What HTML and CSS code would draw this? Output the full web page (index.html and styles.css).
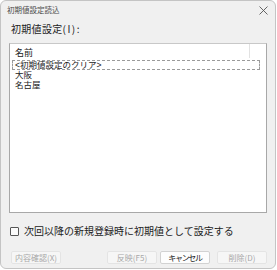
FILE: index.html
```html
<!DOCTYPE html>
<html lang="ja">
<head>
<meta charset="utf-8">
<link rel="stylesheet" href="styles.css">
</head>
<body>
<div class="window">
  <div class="titlebar">
    <span class="title">初期値設定読込</span>
    <svg class="close" width="9" height="9" viewBox="0 0 9 9"><path d="M0.5 0.5 L8.5 8.5 M8.5 0.5 L0.5 8.5" stroke="#555" stroke-width="0.9" fill="none"/></svg>
  </div>
  <div class="content">
    <div class="label">初期値設定<span class="half">(I):</span></div>
    <div class="list">
      <div class="header"><span class="hcell">名前</span></div>
      <div class="row focus">&lt;初期値設定のクリア&gt;</div>
      <div class="row">大阪</div>
      <div class="row">名古屋</div>
    </div>
    <div class="check">
      <span class="box"></span>
      <span class="check-text">次回以降の新規登録時に初期値として設定する</span>
    </div>
    <div class="buttons">
      <div class="btn disabled">内容確認(X)</div>
      <div class="spacer"></div>
      <div class="btn disabled">反映(F5)</div>
      <div class="btn primary cancel">キャンセル</div>
      <div class="btn disabled del">削除(D)</div>
    </div>
  </div>
</div>
</body>
</html>
```
FILE: styles.css
```css
html, body {
  margin: 0;
  padding: 0;
  background: #ffffff;
}
body {
  font-family: "Noto Sans CJK JP", "Noto Sans", sans-serif;
  color: #222;
}
.window {
  width: 274px;
  height: 267px;
  border: 1px solid #c4c4c4;
  border-radius: 6px;
  background: #f0f0f0;
  box-sizing: content-box;
  display: flex;
  flex-direction: column;
  overflow: hidden;
}
.titlebar {
  height: 18px;
  display: flex;
  align-items: center;
  padding-left: 6px;
  padding-right: 7px;
}
.title {
  font-size: 7.5px;
  color: #4a4a4a;
  line-height: 10px;
  flex: 1;
}
.close {
  display: block;
}
.content {
  padding: 4px 8px 0 8px;
  display: flex;
  flex-direction: column;
}
.label {
  font-size: 10px;
  line-height: 12px;
  height: 12px;
  padding-left: 2px;
  color: #222;
  letter-spacing: 0.3px;
}
.half {
  letter-spacing: 1.5px;
}
.list {
  margin-top: 8px;
  height: 168px;
  background: #ffffff;
  border: 1px solid #a8a8a8;
  border-top-color: #c8c8c8;
}
.header {
  height: 16px;
  display: flex;
}
.hcell {
  width: 240px;
  height: 14px;
  border-right: 1px solid #e2e2e2;
  font-size: 9px;
  line-height: 12px;
  padding-top: 3px;
  padding-left: 5px;
  box-sizing: border-box;
  overflow: hidden;
}
.row {
  position: relative;
  height: 10px;
  line-height: 10px;
  font-family: "Liberation Sans", "Noto Sans CJK JP", sans-serif;
  font-size: 8.5px;
  padding-left: 5px;
  width: 240px;
  overflow: hidden;
}
.row.focus {
  overflow: visible;
}
.row.focus::after {
  content: "";
  position: absolute;
  left: 2px;
  top: 0;
  right: -5px;
  bottom: 0;
  border: 1px dashed #9a9a9a;
}
.check {
  margin-top: 12px;
  height: 12px;
  display: flex;
  align-items: center;
}
.box {
  width: 7px;
  height: 7px;
  border: 1px solid #555;
  border-radius: 1px;
  background: #fafafa;
  margin-left: 1px;
}
.check-text {
  margin-left: 5px;
  font-size: 10px;
  line-height: 12px;
  color: #222;
}
.buttons {
  margin-top: 14px;
  display: flex;
  padding-left: 2px;
}
.spacer {
  flex: 1;
}
.btn {
  width: 48px;
  height: 11px;
  border: 1px solid #e4e4e4;
  background: #f6f6f6;
  border-radius: 2px;
  font-size: 8px;
  line-height: 11px;
  text-align: center;
  color: #a8a8a8;
  white-space: nowrap;
}
.btn.primary {
  background: #fdfdfd;
  border-color: #d2d2d2;
  color: #222;
}
.cancel {
  margin-left: 3px;
  letter-spacing: -1.3px;
}
.del {
  margin-left: 7px;
}
```
